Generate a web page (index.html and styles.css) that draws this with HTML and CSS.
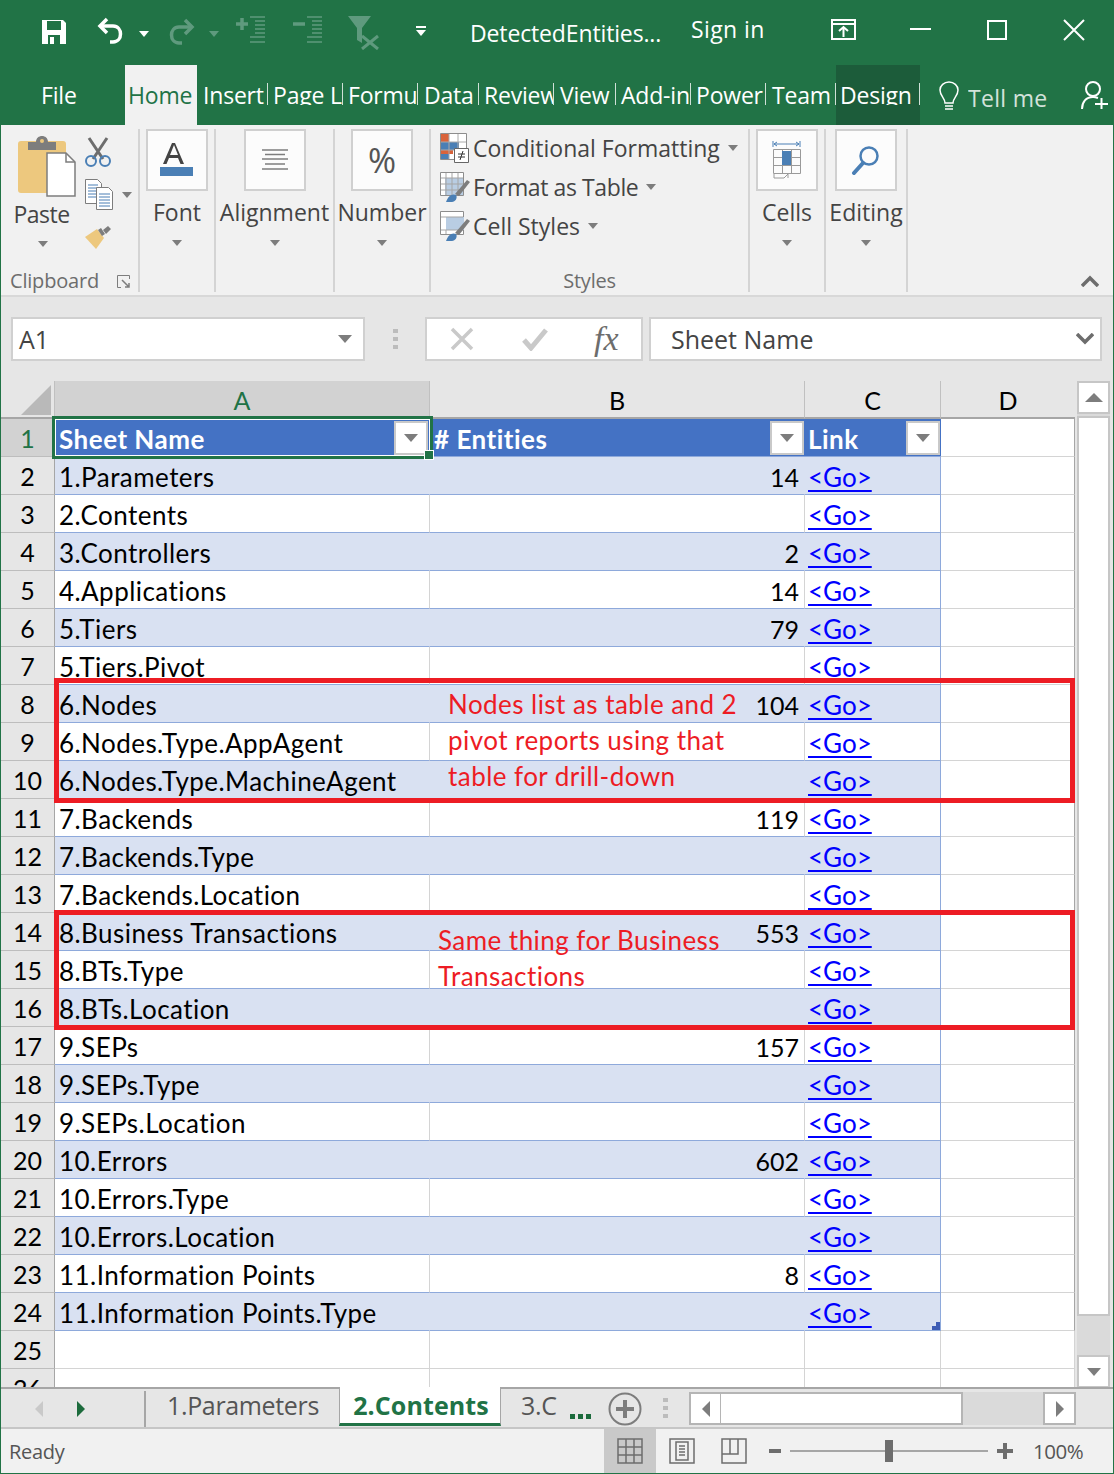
FILE: index.html
```html
<!DOCTYPE html>
<html lang="en">
<head>
    <meta charset="UTF-8">
    <title>DetectedEntities - Excel</title>
    <link rel="stylesheet" href="styles.css">
</head>
<body>
<div class="window">

    <!-- title bar -->
    <div class="titlebar">
        <svg class="qat save" width="26" height="26" viewBox="0 0 26 26"><path d="M1 1h21l3 3v21H1z" fill="#fff"/><path d="M6 2h14v9H6z" fill="#217346"/><path d="M7 16h12v9H7z" fill="#217346"/><path d="M9 18h4v7H9z" fill="#fff"/></svg>
        <svg class="qat undo" width="28" height="28" viewBox="0 0 28 28" fill="none" stroke="#fff" stroke-width="3.500"><path d="M10 2 3 9l7 7"/><path d="M3 9h13c10 0 10 16 0 16h-3"/></svg>
        <i class="caret white undo-caret"></i>
        <svg class="qat redo" width="28" height="28" viewBox="0 0 28 28" fill="none" stroke="#5f9a7e" stroke-width="3.500"><path d="m18 2 7 7-7 7"/><path d="M25 9H12C2 9 2 25 12 25h3"/></svg>
        <i class="caret dim redo-caret"></i>
        <svg class="qat indent" width="29" height="28" viewBox="0 0 29 28" stroke="#5f9a7e" fill="none"><path d="M0 8h12M6 2v12" stroke-width="3.500"/><path d="M14 1h15M19 5h10M19 9h10M19 13h10M19 17h10M14 21h15M14 26h15" stroke-width="1.500"/></svg>
        <svg class="qat outdent" width="29" height="28" viewBox="0 0 29 28" stroke="#5f9a7e" fill="none"><path d="M0 8h12" stroke-width="3.500"/><path d="M14 1h15M19 5h10M19 9h10M19 13h10M19 17h10M14 21h15M14 26h15" stroke-width="1.500"/></svg>
        <svg class="qat funnel" width="32" height="34" viewBox="0 0 32 34"><path d="M0 0h23l-9 12v15l-5-3V12z" fill="#5f9a7e"/><path d="m14 20 16 13M30 20 14 33" stroke="#5f9a7e" stroke-width="3"/></svg>
        <span class="qat-more"><b></b><i class="caret white"></i></span>
        <span class="doc-title">DetectedEntities...</span>
        <span class="sign-in">Sign in</span>
        <svg class="win-btn restore" width="25" height="21" viewBox="0 0 25 21" fill="none" stroke="#fff" stroke-width="2"><path d="M1 1h23v19H1zM1 5h23M12.500 18V8M8 12l4.500-4 4.500 4"/></svg>
        <svg class="win-btn minimize" width="21" height="2" viewBox="0 0 21 2"><path d="M0 1h21" stroke="#fff" stroke-width="2"/></svg>
        <svg class="win-btn maximize" width="20" height="20" viewBox="0 0 20 20" fill="none" stroke="#fff" stroke-width="2"><path d="M1 1h18v18H1z"/></svg>
        <svg class="win-btn close" width="22" height="22" viewBox="0 0 22 22" stroke="#fff" stroke-width="2"><path d="m1 1 20 20M21 1 1 21"/></svg>
    </div>

    <!-- ribbon tabs -->
    <div class="tabs">
        <span class="tab tab-file">File</span>
        <span class="tab tab-home">Home</span>
        <span class="tab tab-insert"><span>Insert</span></span>
        <span class="tab tab-page"><span>Page Layout</span></span>
        <span class="tab tab-formulas"><span>Formulas</span></span>
        <span class="tab tab-data"><span>Data</span></span>
        <span class="tab tab-review"><span>Review</span></span>
        <span class="tab tab-view"><span>View</span></span>
        <span class="tab tab-addin"><span>Add-ins</span></span>
        <span class="tab tab-power"><span>Power</span></span>
        <span class="tab tab-team"><span>Team</span></span>
        <span class="tab tab-design"><span>Design</span></span>
        <svg class="bulb" width="20" height="30" viewBox="0 0 20 30" fill="none" stroke="#fff" stroke-width="1.500"><path d="M6 22c0-5-5-7-5-13a9 8 0 0 1 18 0c0 6-5 8-5 13z"/><path d="M6 25h8M6 28h8"/></svg>
        <span class="tell-me">Tell me</span>
        <svg class="share" width="28" height="30" viewBox="0 0 28 30" fill="none" stroke="#fff" stroke-width="2"><circle cx="12" cy="9" r="7"/><path d="M1 29c0-7 4-12 11-12 2 0 3 .3 5 1M14 24h13M20.500 18v11"/></svg>
    </div>

    <!-- ribbon -->
    <div class="ribbon">
        <div class="group group-clipboard">
            <div class="clip-body">
                <div class="paste">
                    <svg width="58" height="62" viewBox="0 0 58 62"><rect x="0" y="6" width="48" height="52" rx="3" fill="#edc87e"/><path d="M10 7h8c0-8 12-8 12 0h8v8H10z" fill="#7d7d7d"/><circle cx="24" cy="6" r="2" fill="#edc87e"/><path d="M29 23h19l9 9v34H29z" fill="#fff" stroke="#7d7d7d" stroke-width="1.500" transform="translate(0 -5)"/><path d="M48 18v9h9" fill="none" stroke="#7d7d7d" stroke-width="1.500"/></svg>
                    <span class="label">Paste</span>
                    <i class="caret grey"></i>
                </div>
                <div class="clip-small">
                    <svg class="scissors" width="26" height="30" viewBox="0 0 26 30" fill="none"><path d="m4 1 14 21M22 1 8 22" stroke="#6d6d6d" stroke-width="3"/><circle cx="6" cy="24" r="5" stroke="#4a7fb5" stroke-width="2"/><circle cx="20" cy="24" r="5" stroke="#4a7fb5" stroke-width="2"/></svg>
                    <div class="copy-row">
                        <svg width="28" height="31" viewBox="0 0 28 31" fill="#fff" stroke="#7d7d7d"><path d="M.5.500h12l4 4v20H.500z"/><path d="M3 6h10M3 9h10M3 12h10M3 15h10M3 18h10" stroke="#4a7fb5"/><path d="M11.500 8.500h12l4 4v18h-16z"/><path d="M14 15h11M14 18h11M14 21h11M14 24h11M14 27h11" stroke="#4a7fb5"/></svg>
                        <i class="caret grey"></i>
                    </div>
                    <svg class="brush" width="26" height="24" viewBox="0 0 26 24"><path d="M0 11 12 3l7 9-8 11z" fill="#edc87e"/><path d="m13 4 3-2 4 6-3 2zM18 4l5-4 3 3-5 5z" fill="#7d7d7d"/></svg>
                </div>
            </div>
            <div class="group-label clip-label">Clipboard
                <svg class="launcher" width="13" height="13" viewBox="0 0 13 13" fill="none" stroke="#7d7d7d"><path d="M12.500 4V.500H.500v12H4"/><path d="m5 5 7 7M12 8v4H8" stroke-width="1.500"/></svg>
            </div>
        </div>

        <div class="group group-font">
            <div class="big-btn">
                <svg width="34" height="36" viewBox="0 0 34 36"><path d="m3 22 9-21h3l9 21h-3.500l-2.500-6H9l-2.500 6zM10 13h8l-4-10z" fill="#444" fill-rule="evenodd"/><path d="M0 25h33v9H0z" fill="#4a7fb5"/></svg>
            </div>
            <span class="label">Font</span>
            <i class="caret grey"></i>
        </div>
        <div class="group group-align">
            <div class="big-btn">
                <svg width="26" height="22" viewBox="0 0 26 22" stroke="#7d7d7d" stroke-width="1.500"><path d="M0 1h26M3 5.500h20M0 10h26M3 15h20M0 20h26"/></svg>
            </div>
            <span class="label">Alignment</span>
            <i class="caret grey"></i>
        </div>
        <div class="group group-number">
            <div class="big-btn"><span class="percent">%</span></div>
            <span class="label">Number</span>
            <i class="caret grey"></i>
        </div>

        <div class="group group-styles">
            <div class="style-row">
                <svg width="30" height="30" viewBox="0 0 30 30"><path d="M.5.500h26v26H.500z" fill="#fff" stroke="#8d8d8d"/><path d="M1 1h8v8H1zM1 17h12v4H1z" fill="#d9633b"/><path d="M1 9h18v8H1zM1 21h8v5H1z" fill="#4a7fb5"/><path d="M9 1v25M18 1v25M1 9h25M1 17h25" stroke="#aaa"/><path d="M14.500 15.500h14v14h-14z" fill="#fff" stroke="#666"/><path d="M18 21h7M18 24h7M23 18l-3 9" stroke="#333"/></svg>
                <span>Conditional Formatting</span><i class="caret grey"></i>
            </div>
            <div class="style-row tight">
                <svg width="30" height="30" viewBox="0 0 30 30"><path d="M.5.500h23v23H.500z" fill="#fff" stroke="#8d8d8d"/><path d="M5 6h18v17H5z" fill="#b9cde3"/><path d="M6 1v22M12 1v22M18 1v22M1 6h22M1 12h22M1 18h22" stroke="#a5a5a5"/><path d="m15 22 12-14 3 2-11 14z" fill="#7d7d7d"/><path d="M6 30c2-6 6-9 10-7 2 3-1 7-4 7z" fill="#4a7fb5"/></svg>
                <span>Format as Table</span><i class="caret grey"></i>
            </div>
            <div class="style-row">
                <svg width="30" height="30" viewBox="0 0 30 30"><path d="M.5.500h23v23H.500z" fill="#fff" stroke="#8d8d8d"/><path d="M6 6h18v13H6z" fill="#b9cde3"/><path d="M1 6h22M1 19h22M6 19v4M18 19v4" stroke="#a5a5a5"/><path d="m15 22 12-14 3 2-11 14z" fill="#7d7d7d"/><path d="M6 30c2-6 6-9 10-7 2 3-1 7-4 7z" fill="#4a7fb5"/></svg>
                <span>Cell Styles</span><i class="caret grey"></i>
            </div>
            <div class="group-label">Styles</div>
        </div>

        <div class="group group-cells">
            <div class="big-btn">
                <svg width="30" height="38" viewBox="0 0 30 38" fill="none"><path d="M2 3h25M5 1 2 3l3 2M24 1l3 2-3 2M1 0v6M28 0v6" stroke="#4a7fb5"/><path d="M1.500 8.500h27v24h-27zM1.500 16.500h27M1.500 24.500h27M10.500 8.500v24M19.500 8.500v24" stroke="#9a9a9a"/><path d="M10 10h9v14h-9z" fill="#4a7fb5"/><path d="M2 33v4h10l4-4M16 33v4" stroke="#9a9a9a"/></svg>
            </div>
            <span class="label">Cells</span>
            <i class="caret grey"></i>
        </div>
        <div class="group group-editing">
            <div class="big-btn">
                <svg width="30" height="30" viewBox="0 0 30 30" fill="none" stroke="#4a7fb5"><circle cx="18" cy="11" r="8.500" stroke-width="2.500"/><path d="M12 18 3 28" stroke-width="4" stroke-linecap="round"/></svg>
            </div>
            <span class="label">Editing</span>
            <i class="caret grey"></i>
        </div>
        <svg class="collapse" width="18" height="12" viewBox="0 0 18 12" fill="none" stroke="#6d6d6d" stroke-width="3.500"><path d="m1 11 8-8 8 8"/></svg>
    </div>

    <!-- formula bar -->
    <div class="formula-bar">
        <div class="name-box"><span>A1</span><i class="caret grey wide"></i></div>
        <div class="grip"><b></b><b></b><b></b></div>
        <div class="fx-box">
            <svg width="24" height="24" viewBox="0 0 24 24" stroke="#c9c9c9" stroke-width="3.500"><path d="m2 2 20 20M22 2 2 22"/></svg>
            <svg width="26" height="24" viewBox="0 0 26 24" fill="none" stroke="#c9c9c9" stroke-width="5"><path d="m2 13 7 8L24 3"/></svg>
            <span class="fx">fx</span>
        </div>
        <div class="formula-input">
            <span>Sheet Name</span>
            <svg width="18" height="12" viewBox="0 0 18 12" fill="none" stroke="#6d6d6d" stroke-width="3.500"><path d="m1 1 8 8 8-8"/></svg>
        </div>
    </div>

    <!-- worksheet -->
    <div class="sheet">
        <div class="grid-wrap">
            <table class="grid">
                <colgroup><col class="c-head"><col class="c-a"><col class="c-b"><col class="c-c"><col class="c-d"></colgroup>
                <tr class="col-heads">
                    <th class="corner"><i></i></th><th class="selected">A</th><th>B</th><th>C</th><th>D</th>
                </tr>
                <tr class="title-row">
                    <th class="selected">1</th>
                    <td>Sheet Name<span class="filter in-selection"><i class="caret grey wide"></i></span></td>
                    <td># Entities<span class="filter"><i class="caret grey wide"></i></span></td>
                    <td>Link<span class="filter"><i class="caret grey wide"></i></span></td>
                    <td class="empty"></td>
                </tr>
                <tr class="band"><th>2</th><td>1.Parameters</td><td class="num">14</td><td><a>&lt;Go&gt;</a></td><td class="empty"></td></tr>
                <tr><th>3</th><td>2.Contents</td><td class="num"></td><td><a>&lt;Go&gt;</a></td><td class="empty"></td></tr>
                <tr class="band"><th>4</th><td>3.Controllers</td><td class="num">2</td><td><a>&lt;Go&gt;</a></td><td class="empty"></td></tr>
                <tr><th>5</th><td>4.Applications</td><td class="num">14</td><td><a>&lt;Go&gt;</a></td><td class="empty"></td></tr>
                <tr class="band"><th>6</th><td>5.Tiers</td><td class="num">79</td><td><a>&lt;Go&gt;</a></td><td class="empty"></td></tr>
                <tr><th>7</th><td>5.Tiers.Pivot</td><td class="num"></td><td><a>&lt;Go&gt;</a></td><td class="empty"></td></tr>
                <tr class="band"><th>8</th><td>6.Nodes</td><td class="num">104</td><td><a>&lt;Go&gt;</a></td><td class="empty"></td></tr>
                <tr><th>9</th><td>6.Nodes.Type.AppAgent</td><td class="num"></td><td><a>&lt;Go&gt;</a></td><td class="empty"></td></tr>
                <tr class="band"><th>10</th><td>6.Nodes.Type.MachineAgent</td><td class="num"></td><td><a>&lt;Go&gt;</a></td><td class="empty"></td></tr>
                <tr><th>11</th><td>7.Backends</td><td class="num">119</td><td><a>&lt;Go&gt;</a></td><td class="empty"></td></tr>
                <tr class="band"><th>12</th><td>7.Backends.Type</td><td class="num"></td><td><a>&lt;Go&gt;</a></td><td class="empty"></td></tr>
                <tr><th>13</th><td>7.Backends.Location</td><td class="num"></td><td><a>&lt;Go&gt;</a></td><td class="empty"></td></tr>
                <tr class="band"><th>14</th><td>8.Business Transactions</td><td class="num">553</td><td><a>&lt;Go&gt;</a></td><td class="empty"></td></tr>
                <tr><th>15</th><td>8.BTs.Type</td><td class="num"></td><td><a>&lt;Go&gt;</a></td><td class="empty"></td></tr>
                <tr class="band"><th>16</th><td>8.BTs.Location</td><td class="num"></td><td><a>&lt;Go&gt;</a></td><td class="empty"></td></tr>
                <tr><th>17</th><td>9.SEPs</td><td class="num">157</td><td><a>&lt;Go&gt;</a></td><td class="empty"></td></tr>
                <tr class="band"><th>18</th><td>9.SEPs.Type</td><td class="num"></td><td><a>&lt;Go&gt;</a></td><td class="empty"></td></tr>
                <tr><th>19</th><td>9.SEPs.Location</td><td class="num"></td><td><a>&lt;Go&gt;</a></td><td class="empty"></td></tr>
                <tr class="band"><th>20</th><td>10.Errors</td><td class="num">602</td><td><a>&lt;Go&gt;</a></td><td class="empty"></td></tr>
                <tr><th>21</th><td>10.Errors.Type</td><td class="num"></td><td><a>&lt;Go&gt;</a></td><td class="empty"></td></tr>
                <tr class="band"><th>22</th><td>10.Errors.Location</td><td class="num"></td><td><a>&lt;Go&gt;</a></td><td class="empty"></td></tr>
                <tr><th>23</th><td>11.Information Points</td><td class="num">8</td><td><a>&lt;Go&gt;</a></td><td class="empty"></td></tr>
                <tr class="band last"><th>24</th><td>11.Information Points.Type</td><td class="num"></td><td><a>&lt;Go&gt;</a><i class="table-handle"></i></td><td class="empty"></td></tr>
                <tr class="blank"><th>25</th><td></td><td></td><td></td><td class="empty"></td></tr>
                <tr class="blank"><th>26</th><td></td><td></td><td></td><td class="empty"></td></tr>
            </table>

            <!-- things lying over the grid -->
            <div class="selection"><i></i></div>
            <div class="red-box box-nodes"></div>
            <div class="red-box box-bts"></div>
            <p class="note note-nodes">Nodes list as table and 2<br>pivot reports using that<br>table for drill-down</p>
            <p class="note note-bts">Same thing for Business<br>Transactions</p>
        </div>

        <div class="vscroll">
            <div class="scroll-btn"><i class="caret-up"></i></div>
            <div class="vthumb"></div>
            <div class="scroll-btn down"><i class="caret grey wide"></i></div>
        </div>
    </div>

    <!-- sheet tabs -->
    <div class="sheet-tabs">
        <div class="nav">
            <i class="arrow-left light"></i>
            <i class="arrow-right green"></i>
        </div>
        <span class="sheet-tab first">1.Parameters</span>
        <span class="sheet-tab active">2.Contents</span>
        <span class="sheet-tab next">3.C</span>
        <span class="more"><b></b><b></b><b></b></span>
        <svg class="add-sheet" width="34" height="34" viewBox="0 0 34 34" fill="none" stroke="#7d7d7d"><circle cx="17" cy="17" r="15.500" stroke-width="2"/><path d="M17 8v18M8 17h18" stroke-width="4"/></svg>
        <div class="grip tab-grip"><b></b><b></b><b></b></div>
        <div class="hscroll">
            <div class="hbtn"><i class="arrow-left"></i></div>
            <div class="hthumb"></div>
            <div class="hbtn end"><i class="arrow-right"></i></div>
        </div>
    </div>

    <!-- status bar -->
    <div class="statusbar">
        <span class="ready">Ready</span>
        <div class="view-btn on">
            <svg width="26" height="26" viewBox="0 0 26 26" fill="none" stroke="#6d6d6d" stroke-width="1.500"><path d="M1 1h24v24H1zM1 9h24M1 17h24M9 1v24M17 1v24"/></svg>
        </div>
        <div class="view-btn">
            <svg width="26" height="26" viewBox="0 0 26 26" fill="none" stroke="#6d6d6d" stroke-width="1.500"><path d="M1 1h24v24H1zM7 4h12v18H7zM10 8h6M10 11h6M10 14h6M10 17h6"/></svg>
        </div>
        <div class="view-btn">
            <svg width="26" height="26" viewBox="0 0 26 26" fill="none" stroke="#6d6d6d" stroke-width="1.500"><path d="M1 1h24v24H1zM1 16h16V1M9 1v15"/></svg>
        </div>
        <div class="zoom">
            <b class="minus"></b>
            <div class="slider"><i></i></div>
            <svg width="16" height="16" viewBox="0 0 16 16" stroke="#6d6d6d" stroke-width="4"><path d="M8 0v16M0 8h16"/></svg>
        </div>
        <span class="percent-zoom">100%</span>
    </div>
</div>
</body>
</html>
```

FILE: styles.css
```css
* {
    box-sizing: border-box;
}
html, body {
    margin: 0;
    height: 100%;
}
body {
    font-family: "Open Sans", "Noto Sans", sans-serif;
    overflow: hidden;
}
svg {
    display: block;
    flex: none;
}
.window {
    width: 1114px;
    height: 1474px;
    border: 1px solid #217346;
    border-top: 0;
    display: flex;
    flex-direction: column;
    background: #e6e6e6;
    overflow: hidden;
}

/* carets */
.caret {
    display: block;
    flex: none;
    width: 0;
    height: 0;
    border-left: 5px solid transparent;
    border-right: 5px solid transparent;
    border-top: 6px solid #7d7d7d;
}
.caret.wide {
    border-left-width: 7px;
    border-right-width: 7px;
    border-top-width: 8px;
}
.caret.white { border-top-color: #fff; }
.caret.dim { border-top-color: #5f9a7e; }

/* title bar */
.titlebar {
    height: 65px;
    flex: none;
    background: #217346;
    color: #fff;
    display: flex;
    align-items: center;
    font-size: 23px;
    letter-spacing: -0.14px;
}
.qat.save { margin-left: 40px; margin-top: -2px; }
.qat.undo { margin-left: 30px; margin-top: -4px; }
.undo-caret { margin-left: 14px; margin-top: 2px; }
.qat.redo { margin-left: 18px; margin-top: -2px; }
.redo-caret { margin-left: 14px; margin-top: 2px; }
.qat.indent { margin-left: 17px; margin-top: -6px; }
.qat.outdent { margin-left: 28px; margin-top: -6px; }
.qat.funnel { margin-left: 26px; }
.qat-more { margin-left: 36px; display: flex; flex-direction: column; gap: 2px; margin-top: -4px; }
.qat-more b { display: block; width: 10px; height: 2px; background: #fff; }
.doc-title { margin-left: 44px; width: 221px; }
.sign-in { letter-spacing: .4px; margin-top: -8px; width: 140px; }
.win-btn.restore { margin-top: -6px; }
.win-btn.minimize { margin-left: 54px; margin-top: -8px; }
.win-btn.maximize { margin-left: 56px; margin-top: -6px; }
.win-btn.close { margin-left: 56px; margin-top: -6px; }

/* ribbon tabs */
.tabs {
    height: 60px;
    flex: none;
    background: #217346;
    color: #fff;
    display: flex;
    font-size: 23px;
    letter-spacing: -0.2px;
}
.tab {
    height: 60px;
    line-height: 60px;
    white-space: nowrap;
}
.tab > span {
    display: block;
    height: 22px;
    margin-top: 18px;
    line-height: 24px;
    padding-left: 6px;
    overflow: hidden;
    border-right: 1px solid #cfe0d7;
}
.tab-file { width: 124px; padding-left: 40px; }
.tab-home { width: 72px; background: #f1f1f1; color: #217346; padding-left: 3px; }
.tab-insert { width: 71px; }
.tab-page { width: 75px; }
.tab-formulas { width: 75px; }
.tab-data { width: 61px; }
.tab-review { width: 75px; }
.tab-view { width: 62px; }
.tab-addin { width: 75px; }
.tab-power { width: 75px; }
.tab-team { width: 70px; }
.tab-design { width: 84px; background: #1c5c3a; }
.tab-design > span { padding-left: 4px; }
.tab-page > span, .tab-formulas > span, .tab-review > span, .tab-addin > span, .tab-power > span { padding-left: 5px; }
.bulb { margin: 16px 0 0 19px; }
.tell-me { margin: 18px 0 0 9px; opacity: .8; line-height: 30px; letter-spacing: .3px; }
.share { margin: 15px 0 0 34px; }

/* ribbon */
.ribbon {
    height: 172px;
    flex: none;
    background: #f1f1f1;
    border-bottom: 2px solid #d8d8d8;
    display: flex;
    position: relative;
    padding-top: 4px;
    font-size: 23px;
    letter-spacing: 0;
    color: #444;
}
.group {
    height: 163px;
    border-right: 2px solid #d4d4d4;
    display: flex;
    flex-direction: column;
    align-items: center;
    position: relative;
}
.group-clipboard { width: 139px; }
.group-font { width: 76px; }
.group-align { width: 119px; }
.group-number { width: 96px; }
.group-styles { width: 319px; align-items: flex-start; padding-left: 9px; }
.group-cells { width: 76px; }
.group-editing { width: 82px; }
.big-btn {
    width: 62px;
    height: 62px;
    background: #fcfcfc;
    border: 2px solid #d0d0d0;
    display: flex;
    align-items: center;
    justify-content: center;
    flex: none;
}
.label {
    display: block;
    margin-top: 6px;
    line-height: 30px;
    white-space: nowrap;
}
.group > .caret { margin-top: 13px; }
.percent { font-size: 34px; color: #555; }
.group-label {
    position: absolute;
    bottom: -4px;
    left: 0;
    right: 0;
    text-align: center;
    font-size: 20px;
    line-height: 30px;
    color: #6d6d6d;
    letter-spacing: -0.2px;
}

/* clipboard */
.clip-body { display: flex; width: 100%; }
.paste {
    width: 84px;
    display: flex;
    flex-direction: column;
    align-items: center;
    padding-top: 6px;
}
.paste svg { margin-left: 8px; }
.paste .label { margin-top: 2px; letter-spacing: -0.5px; margin-left: -3px; }
.paste .caret { margin-top: 12px; }
.clip-small { display: flex; flex-direction: column; }
.scissors { margin-top: 8px; }
.copy-row { display: flex; align-items: center; gap: 9px; margin-top: 12px; }
.brush { margin-top: 16px; }
.clip-label { text-align: left; padding-left: 9px; }
.launcher { position: absolute; left: 116px; top: 9px; }

/* styles */
.style-row {
    height: 39px;
    display: flex;
    align-items: center;
    white-space: nowrap;
}
.style-row:first-child { margin-top: -1px; }
.style-row span { margin: 0 8px 0 3px; }
.style-row.tight span { letter-spacing: -0.4px; }

.collapse { position: absolute; right: 14px; bottom: 8px; }

/* formula bar */
.formula-bar {
    height: 84px;
    flex: none;
    background: #e6e6e6;
    display: flex;
    padding: 20px 11px 20px 10px;
    color: #444;
    font-size: 25px;
}
.name-box, .fx-box, .formula-input {
    background: #fff;
    border: 2px solid #d0d0d0;
    display: flex;
    align-items: center;
}
.name-box {
    width: 354px;
    padding: 0 11px 0 6px;
    justify-content: space-between;
}
.grip {
    display: flex;
    flex-direction: column;
    justify-content: center;
    gap: 4px;
    width: 60px;
    align-items: center;
}
.grip b { display: block; width: 5px; height: 4px; background: #bcbcbc; }
.fx-box {
    width: 218px;
    padding-left: 23px;
    gap: 48px;
}
.fx {
    font-family: "Liberation Serif", serif;
    font-style: italic;
    font-size: 34px;
    color: #6d6d6d;
    margin-left: -2px;
    line-height: 1;
}
.formula-input {
    margin-left: 6px;
    flex: 1;
    padding: 0 6px 0 20px;
    justify-content: space-between;
}

/* worksheet */
.sheet {
    height: 1006px;
    flex: none;
    display: flex;
    overflow: hidden;
    background: #e6e6e6;
}
.grid-wrap {
    position: relative;
    width: 1075px;
    flex: none;
}
.grid {
    table-layout: fixed;
    border-collapse: separate;
    border-spacing: 0;
    width: 1074px;
    font-family: Lato, "Liberation Sans", sans-serif;
    font-size: 26px;
    letter-spacing: .45px;
    color: #000;
    background: #fff;
}
.c-head { width: 54px; }
.c-a { width: 375px; }
.c-b { width: 375px; }
.c-c { width: 136px; }
.c-d { width: 134px; }
.grid tr { height: 38px; }
.grid th {
    background: #e6e6e6;
    font-size: 25px;
    letter-spacing: 0;
    font-weight: 400;
    text-align: center;
    padding: 0;
    border-right: 1px solid #a6a6a6;
    border-bottom: 1px solid #bdbdbd;
}
.grid td {
    height: 38px;
    padding: 2px 4px 0;
    line-height: 34px;
    white-space: nowrap;
    border-right: 1px solid #d4d4d4;
    border-bottom: 1px solid #8ea9db;
    position: relative;
    overflow: visible;
}
.grid td.empty {
    background: #fff;
    border-bottom-color: #d4d4d4;
    border-right: 1px solid #a6a6a6;
}
.grid td.num { text-align: right; font-size: 25px; letter-spacing: 0; padding-right: 5px; }
.col-heads th {
    border-bottom: 2px solid #a6a6a6;
    border-right: 1px solid #c0c0c0;
    padding-top: 2px;
}
.col-heads th:last-child { border-right: 0; }
.col-heads .selected { background: #d2d2d2; }
th.selected { color: #217346; background: #d2d2d2; }
.corner { position: relative; }
.corner i {
    position: absolute;
    right: 3px;
    bottom: 2px;
    border-left: 30px solid transparent;
    border-bottom: 30px solid #b9b9b9;
}
.title-row td {
    background: #4472c4;
    color: #fff;
    font-weight: 700;
    letter-spacing: .5px;
    border-right: 0;
    border-bottom-color: #8ea9db;
}
.filter {
    position: absolute;
    right: 1px;
    top: 2px;
    width: 34px;
    height: 34px;
    background: #fff;
    border: 2px solid #c9c9c9;
    display: flex;
    align-items: center;
    justify-content: center;
}
.filter.in-selection { right: 2px; }
.band td { background: #d9e1f2; border-right-color: #d9e1f2; }
.grid tr td:nth-child(4) { border-right-color: #8ea9db; padding-left: 3px; }
.title-row td.empty { background: #fff; border-bottom-color: #d4d4d4; color: #000; }
.grid .blank td, .grid .blank td:nth-child(4) { background: #fff; border-bottom-color: #d4d4d4; border-right-color: #d4d4d4; }
.grid a {
    color: #0000ff;
    letter-spacing: 0;
    text-decoration: underline;
    text-underline-offset: 3px;
    text-decoration-thickness: 2px;
}
.table-handle {
    position: absolute;
    right: 0;
    bottom: 0;
    width: 8px;
    height: 8px;
    background: #3f5db5;
    clip-path: polygon(50% 0, 100% 0, 100% 100%, 0 100%, 0 50%, 50% 50%);
}

/* overlays on the grid */
.selection {
    position: absolute;
    left: 51px;
    top: 35px;
    width: 381px;
    height: 43px;
    border: 3px solid #217346;
    outline: 1px solid #fff;
    outline-offset: -4px;
}
.selection i {
    position: absolute;
    right: -3px;
    bottom: -3px;
    width: 8px;
    height: 8px;
    background: #217346;
    outline: 1px solid #fff;
}
.red-box {
    position: absolute;
    left: 53px;
    width: 1021px;
    border: 5px solid #ed1c24;
}
.box-nodes { top: 297px; height: 125px; }
.box-bts { top: 529px; height: 120px; }
.note {
    position: absolute;
    margin: 0;
    font-family: Lato, "Liberation Sans", sans-serif;
    font-size: 26px;
    letter-spacing: .45px;
    line-height: 36px;
    color: #ed1c24;
    white-space: nowrap;
}
.note-nodes { left: 447px; top: 305px; }
.note-bts { left: 437px; top: 541px; }

/* vertical scrollbar */
.vscroll {
    width: 33px;
    margin-left: 1px;
    background: #dadada;
    display: flex;
    flex-direction: column;
    position: relative;
}
.scroll-btn {
    height: 33px;
    flex: none;
    background: #fff;
    border: 2px solid #c6c6c6;
    display: flex;
    align-items: center;
    justify-content: center;
}
.scroll-btn.down { margin-top: 39px; }
.vthumb {
    height: 900px;
    flex: none;
    margin-top: 2px;
    background: #fff;
    border: 2px solid #c6c6c6;
}
.caret-up {
    display: block;
    width: 0;
    height: 0;
    border-left: 9px solid transparent;
    border-right: 9px solid transparent;
    border-bottom: 9px solid #7d7d7d;
}

/* sheet tabs */
.sheet-tabs {
    height: 42px;
    flex: none;
    background: #e6e6e6;
    border-top: 2px solid #a6a6a6;
    border-bottom: 2px solid #c6c6c6;
    display: flex;
    align-items: flex-start;
    font-size: 25px;
    color: #555;
    letter-spacing: -0.35px;
}
.nav {
    width: 145px;
    height: 36px;
    margin-top: 2px;
    border-right: 2px solid #a6a6a6;
    display: flex;
    align-items: center;
    padding-left: 34px;
    gap: 34px;
}
.arrow-left, .arrow-right {
    display: block;
    width: 0;
    height: 0;
    border-top: 8px solid transparent;
    border-bottom: 8px solid transparent;
}
.arrow-left { border-right: 8px solid #7d7d7d; }
.arrow-right { border-left: 8px solid #7d7d7d; }
.arrow-left.light { border-right-color: #c9c9c9; }
.arrow-right.green { border-left-color: #1c6b3c; }
.sheet-tab {
    height: 38px;
    line-height: 33px;
    padding: 0 21px;
    white-space: nowrap;
}
.sheet-tab.first { width: 193px; }
.sheet-tab.active {
    width: 162px;
    margin-top: -2px;
    height: 39px;
    background: #fff;
    border: 1px solid #a6a6a6;
    border-top: 0;
    border-bottom: 3px solid #217346;
    color: #217346;
    font-weight: 700;
    letter-spacing: .1px;
    padding: 2px 0 0 2px;
    text-align: center;
}
.sheet-tab.next { width: 69px; padding-left: 20px; padding-right: 0; }
.more { display: flex; gap: 3px; margin-top: 25px; }
.more b { display: block; width: 5px; height: 5px; background: #1c6b3c; }
.add-sheet { margin: 3px 0 0 17px; }
.tab-grip { width: 47px; height: 38px; }
.hscroll {
    width: 387px;
    height: 33px;
    margin-top: 3px;
    background: #dadada;
    display: flex;
}
.hbtn {
    width: 33px;
    flex: none;
    background: #fff;
    border: 2px solid #b5b5b5;
    display: flex;
    align-items: center;
    justify-content: center;
}
.hthumb {
    width: 242px;
    flex: none;
    margin-left: -1px;
    background: #fff;
    border: 2px solid #b5b5b5;
    border-left: 0;
}
.hbtn.end { margin-left: auto; }

/* status bar */
.statusbar {
    flex: 1;
    background: #f1f1f1;
    display: flex;
    align-items: center;
    font-size: 20px;
    color: #555;
}
.ready { width: 603px; padding-left: 8px; letter-spacing: -0.3px; }
.view-btn {
    width: 52px;
    height: 100%;
    display: flex;
    align-items: center;
    justify-content: center;
}
.view-btn.on { background: #c9c9c9; }
.zoom {
    display: flex;
    align-items: center;
    margin-left: 9px;
}
.minus { display: block; width: 12px; height: 4px; background: #6d6d6d; }
.slider {
    width: 198px;
    height: 2px;
    margin: 0 9px;
    background: #a6a6a6;
    position: relative;
}
.slider i {
    position: absolute;
    left: 95px;
    top: -10px;
    width: 8px;
    height: 22px;
    background: #6d6d6d;
}
.percent-zoom { margin-left: 20px; font-size: 20.500px; letter-spacing: -0.5px; }
```
